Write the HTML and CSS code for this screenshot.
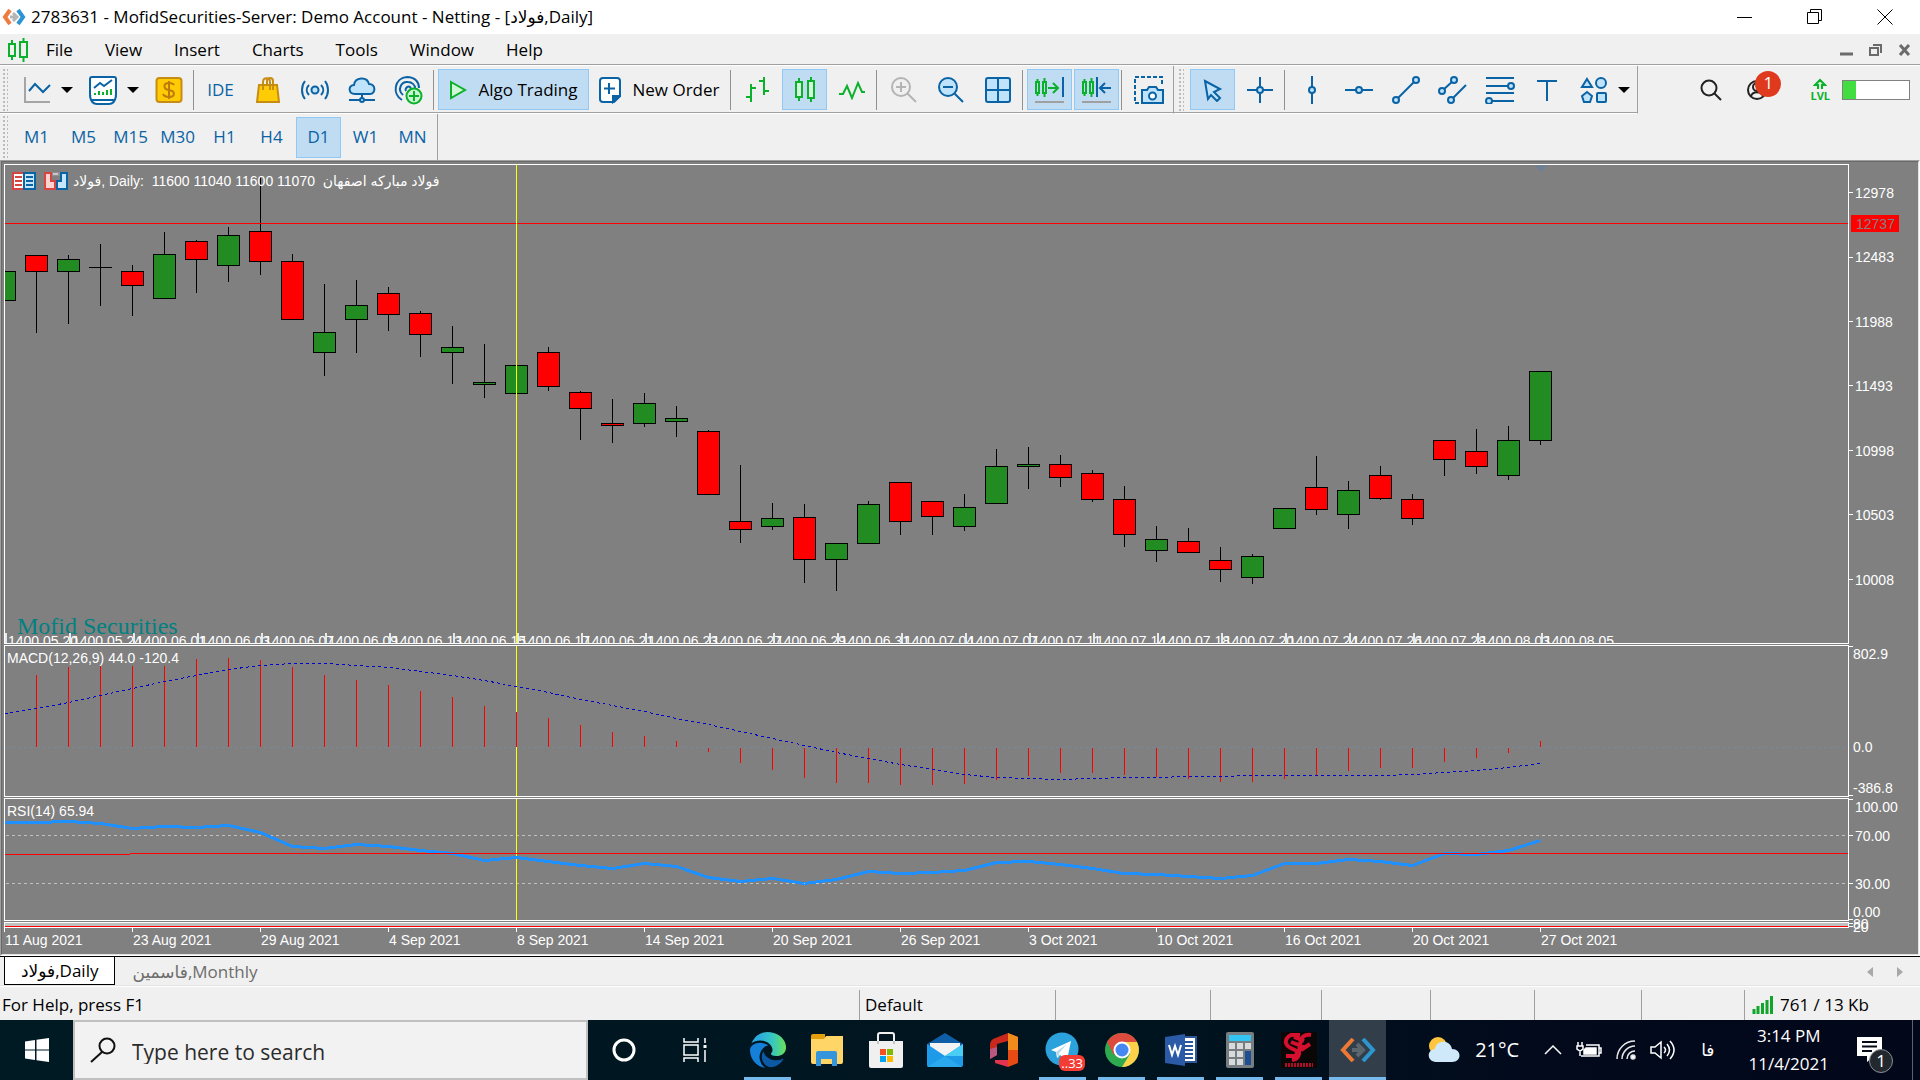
FILE: index.html
```html
<!DOCTYPE html>
<html lang="en">
<head>
  <meta charset="UTF-8">
  <title>2783631 - MofidSecurities-Server: Demo Account - Netting - [فولاد,Daily]</title>
  <link rel="stylesheet" href="styles.css">
</head>
<body>
  <!-- Title bar -->
  <header class="titlebar">
    <svg class="app-logo" width="24" height="18" viewBox="0 0 24 18" fill="none">
      <path d="M8 2L3 9l5 7" stroke="#f07b3f" stroke-width="4"/>
      <path d="M16 2l5 7-5 7" stroke="#2b95d3" stroke-width="4"/>
      <path d="M8 9h6M11 5l4 4-4 4" stroke="#b5b5b5" stroke-width="3"/>
    </svg>
    <h1 class="title">2783631 - MofidSecurities-Server: Demo Account - Netting - [فولاد,Daily]</h1>
    <div class="window-controls">
      <button aria-label="Minimize"><svg width="16" height="16"><path d="M0 8.5h15" stroke="#000"/></svg></button>
      <button aria-label="Restore"><svg width="16" height="16" fill="none" stroke="#000"><path d="M.5 3.5h11v11H.5zM3.5 3.5v-3h11v11h-3"/></svg></button>
      <button aria-label="Close"><svg width="16" height="16" stroke="#000"><path d="M.5.5l15 15M15.5.5l-15 15"/></svg></button>
    </div>
  </header>

  <!-- Menu -->
  <nav class="menubar">
    <svg class="menu-logo" width="22" height="24" viewBox="0 0 22 24" fill="none" stroke="#0cb12b" stroke-width="2">
      <path d="M1 6h6v12H1zM4 2v4M4 18v4" /><path d="M12 4h7v15h-7zM15.500 0v4M15.500 19v5"/>
    </svg>
    <button>File</button>
    <button>View</button>
    <button>Insert</button>
    <button>Charts</button>
    <button>Tools</button>
    <button>Window</button>
    <button>Help</button>
    <div class="mdi-controls">
      <button aria-label="Minimize chart"><svg width="14" height="12"><path d="M0 10h13" stroke="#6b6b6b" stroke-width="3"/></svg></button>
      <button aria-label="Restore chart"><svg width="14" height="12" fill="none" stroke="#6b6b6b" stroke-width="2"><path d="M1 4h8v7H1zM4 1h8v8"/></svg></button>
      <button aria-label="Close chart"><svg width="14" height="12" stroke="#6b6b6b" stroke-width="3"><path d="M2 1l9 10M11 1L2 11"/></svg></button>
    </div>
  </nav>

  <!-- Standard and line studies toolbars -->
  <div class="toolbar-row">
    <div class="toolbar">
      <span class="grip"></span>
      <div class="split">
        <button class="tool" aria-label="New chart"><svg width="28" height="28" fill="none" stroke-width="2"><path d="M2 1v25h25" stroke="#a5a5a5"/><path d="M6 15l6-7 8 8 7-7" stroke="#0a63a5"/></svg></button>
        <button class="drop" aria-label="More charts"></button>
      </div>
      <div class="split">
        <button class="tool" aria-label="Profiles"><svg width="30" height="30" fill="none" stroke="#0a63a5" stroke-width="2"><rect x="2" y="2" width="26" height="20" rx="2" fill="#fff"/><path d="M2 21c1 7 5 8 7 8h12c3 0 6-2 7-8" fill="#fff"/><path d="M4 25h22" stroke-width="2"/><path d="M6 13l6-5 4 3 8-6"/><path d="M7 20v-2M11 20v-4M15 20v-3M19 20v-5M23 20v-6" stroke="#0cb12b"/></svg></button>
        <button class="drop" aria-label="More profiles"></button>
      </div>
      <button class="tool" aria-label="Market"><svg width="28" height="28"><rect x="1.500" y="2" width="25" height="24" rx="3" fill="#ffcb05" stroke="#c78d12" stroke-width="2"/><path d="M19 9c-1-2-3-2-5-2-6 0-6 6 0 7 7 1 6 7 0 7-3 0-5-1-6-3M14 5v18" fill="none" stroke="#c07a0c" stroke-width="2"/></svg></button>
      <i class="sep"></i>
      <button class="tool ide">IDE</button>
      <button class="tool" aria-label="Shop"><svg width="26" height="28"><path d="M4 9h18l2 17H2z" fill="#ffcb05" stroke="#c78d12" stroke-width="2"/><path d="M8 14V6c0-5 7-5 7 0v8M12 9V5c0-4 6-4 6 0v9" fill="none" stroke="#c78d12" stroke-width="2"/></svg></button>
      <button class="tool" aria-label="Signals"><svg width="28" height="24" fill="none" stroke="#0a63a5" stroke-width="2"><circle cx="14" cy="12" r="3.500" fill="#bfe3fb"/><path d="M8 7c-3 3-3 7 0 10M20 7c3 3 3 7 0 10M4 3c-4 5-4 13 0 18M24 3c4 5 4 13 0 18"/></svg></button>
      <button class="tool" aria-label="Virtual hosting"><svg width="28" height="26" fill="none" stroke="#0a63a5" stroke-width="2"><path d="M7 17c-7 0-7-9-1-9 1-8 13-9 15-1 7 0 7 10 1 10z" fill="#bfe3fb"/><path d="M14 17v4M1 23h26"/><circle cx="14" cy="23" r="2" fill="#bfe3fb"/></svg></button>
      <button class="tool" aria-label="Strategy tester"><svg width="30" height="30" fill="none" stroke="#0a63a5" stroke-width="2"><path d="M8 25C-2 19 0 3 13 2c8 0 12 5 12 11M9 20c-6-5-2-14 5-13 4 0 7 3 7 6M12 16c-2-3 4-7 5-2"/><circle cx="20" cy="21" r="7.500" fill="#c9f5d0" stroke="#0cb12b"/><path d="M20 16v10M15 21h10" stroke="#0cb12b"/></svg></button>
      <i class="sep"></i>
      <button class="tool labelled active"><svg width="18" height="20"><path d="M2 2l14 8-14 8z" fill="#d0f8d6" stroke="#0cb12b" stroke-width="2"/></svg>Algo Trading</button>
      <button class="tool labelled order"><svg width="22" height="28" fill="none" stroke="#0a63a5" stroke-width="2"><path d="M4 2h14q3 0 3 3v15l-6 6H4q-3 0-3-3V5q0-3 3-3z" fill="#fff"/><path d="M14 26v-6h7z" fill="#0a63a5"/><path d="M10 7v11M5 12.500h11"/></svg>New Order</button>
      <i class="sep"></i>
      <button class="tool" aria-label="Bar chart"><svg width="26" height="28" fill="none" stroke="#0cb12b" stroke-width="2"><path d="M6 8v18M1 21h5M6 12h5M19 1v18M14 5h5M19 15h5"/></svg></button>
      <button class="tool active" aria-label="Candlesticks"><svg width="26" height="28" fill="#d3f7da" stroke="#0cb12b" stroke-width="2"><path d="M4 6h6v15H4zM16 5h6v17h-6z"/><path d="M7 2v4M7 21v4M19 1v4M19 22v4"/></svg></button>
      <button class="tool" aria-label="Line chart"><svg width="28" height="20" fill="none" stroke="#0cb12b" stroke-width="2"><path d="M1 14h4l4-8 5 12 6-15 4 9h3"/></svg></button>
      <i class="sep"></i>
      <button class="tool" aria-label="Zoom in"><svg width="28" height="28" fill="none" stroke="#b4b4b4" stroke-width="2"><circle cx="11" cy="11" r="9"/><path d="M17 17l9 9M6 11h10M11 6v10"/></svg></button>
      <button class="tool" aria-label="Zoom out"><svg width="28" height="28" fill="none" stroke="#0a63a5" stroke-width="2"><circle cx="11" cy="11" r="9" fill="#bfe3fb"/><path d="M17 17l9 9M6 11h10"/></svg></button>
      <button class="tool" aria-label="Tile windows"><svg width="28" height="28" fill="#bfe3fb" stroke="#0a63a5" stroke-width="2"><rect x="2" y="2" width="24" height="24" rx="2"/><path d="M14 2v24M2 14h24"/></svg></button>
      <i class="sep"></i>
      <button class="tool active" aria-label="Auto scroll"><svg width="32" height="28" fill="none" stroke="#0cb12b" stroke-width="2"><path d="M2 6h3v11H2zM9 6h3v11H9zM3.500 3v3M3.500 17v3M10.500 2v4M10.500 17v4M14 12h9M19 7l5 5-5 5"/><path d="M29 1v20" stroke="#0a63a5"/><path d="M1 26h29" stroke="#a0a0a0"/></svg></button>
      <button class="tool active" aria-label="Chart shift"><svg width="32" height="28" fill="none" stroke="#0cb12b" stroke-width="2"><path d="M2 6h3v11H2zM9 6h3v11H9zM3.500 3v3M3.500 17v3M10.500 2v4M10.500 17v4"/><path d="M16 1v20M20 12h10M24 7l-5 5 5 5" stroke="#0a63a5"/><path d="M1 26h29" stroke="#a0a0a0"/></svg></button>
      <i class="sep"></i>
      <button class="tool" aria-label="Screenshot"><svg width="32" height="32" fill="none" stroke="#0a63a5" stroke-width="2"><path d="M6 29H2V3h27v8" stroke-dasharray="4 2"/><path d="M9 16h5l2-3h7l2 3h5v13H9z" fill="#bfe3fb"/><circle cx="19.500" cy="22" r="3.500" fill="#fff"/></svg></button>
    </div>
    <div class="toolbar studies">
      <span class="grip"></span>
      <button class="tool active" aria-label="Cursor"><svg width="24" height="24"><path d="M4 3l15 8-6 3 6 6-3 3-6-6-3 4z" fill="#bfe3fb" stroke="#0a63a5" stroke-width="2"/></svg></button>
      <button class="tool" aria-label="Crosshair"><svg width="26" height="26" stroke="#0a63a5" stroke-width="2"><path d="M13 0v26M0 13h26"/><circle cx="13" cy="13" r="3" fill="#bfe3fb"/></svg></button>
      <i class="sep"></i>
      <button class="tool" aria-label="Vertical line"><svg width="26" height="28" stroke="#0a63a5" stroke-width="2"><path d="M13 0v28"/><circle cx="13" cy="14" r="3" fill="#bfe3fb"/></svg></button>
      <button class="tool" aria-label="Horizontal line"><svg width="28" height="26" stroke="#0a63a5" stroke-width="2"><path d="M0 13h28"/><circle cx="14" cy="13" r="3" fill="#bfe3fb"/></svg></button>
      <button class="tool" aria-label="Trend line"><svg width="28" height="28" fill="#bfe3fb" stroke="#0a63a5" stroke-width="2"><path d="M4 24L24 4"/><circle cx="4" cy="24" r="3"/><circle cx="24" cy="4" r="3"/></svg></button>
      <button class="tool" aria-label="Channel"><svg width="30" height="28" fill="#bfe3fb" stroke="#0a63a5" stroke-width="2"><path d="M4 15L16 4M13 24L28 9"/><circle cx="4" cy="15" r="3"/><circle cx="16" cy="4" r="3"/><circle cx="13" cy="24" r="3"/></svg></button>
      <button class="tool" aria-label="Fibonacci"><svg width="30" height="28" fill="#bfe3fb" stroke="#0a63a5" stroke-width="2"><path d="M1 2h28M1 10h22M1 17h28M5 25h24"/><circle cx="26" cy="10" r="3"/><circle cx="4" cy="25" r="3"/></svg></button>
      <button class="tool" aria-label="Text"><svg width="22" height="22" stroke="#0a63a5" stroke-width="2"><path d="M1 2h20M11 2v20"/></svg></button>
      <div class="split">
        <button class="tool" aria-label="Shapes"><svg width="28" height="28" fill="#bfe3fb" stroke="#0a63a5" stroke-width="2"><path d="M7 3l5 8H2z"/><circle cx="21" cy="7" r="5"/><path d="M7 16l5 4-2 6H4l-2-6z"/><rect x="17" y="17" width="9" height="9" rx="1"/></svg></button>
        <button class="drop" aria-label="More shapes"></button>
      </div>
    </div>
    <div class="account">
      <button aria-label="Search"><svg width="22" height="22" fill="none" stroke="#222" stroke-width="2"><circle cx="9" cy="9" r="7.500"/><path d="M14 14l7 7"/></svg></button>
      <button class="user" aria-label="Notifications"><svg width="20" height="20" fill="none" stroke="#222" stroke-width="2"><circle cx="10" cy="10" r="9"/><circle cx="10" cy="7" r="4"/><path d="M4 16c2-5 10-5 12 0"/></svg><span class="badge">1</span></button>
      <div class="lvl"><svg width="14" height="12" fill="#d3f7da" stroke="#0cb12b" stroke-width="2"><path d="M5 11V7H2l5-5 5 5H9v4"/></svg>LVL</div>
      <div class="level"><span></span></div>
    </div>
  </div>

  <!-- Timeframes -->
  <div class="toolbar timeframes">
    <span class="grip"></span>
    <button class="tool">M1</button>
    <button class="tool">M5</button>
    <button class="tool">M15</button>
    <button class="tool">M30</button>
    <button class="tool">H1</button>
    <button class="tool">H4</button>
    <button class="tool active">D1</button>
    <button class="tool">W1</button>
    <button class="tool">MN</button>
  </div>

  <!-- Chart window -->
  <main class="chart">
    <div class="chart-inner">
      <div class="pane price">
        <svg class="plot" id="price"></svg>
        <svg class="axis" id="price-axis"></svg>
        <div class="chart-title">
          <svg width="24" height="18" fill="none"><rect x="1" y="1" width="11" height="16" fill="#fff" stroke="#d64541" stroke-width="2"/><rect x="12" y="1" width="11" height="16" fill="#c5e6fb" stroke="#0a63a5" stroke-width="2"/><path d="M3 5h7M3 9h7M3 13h7" stroke="#d64541" stroke-width="2"/><path d="M14 5h7M14 9h7M14 13h7" stroke="#0a63a5" stroke-width="2"/></svg>
          <svg width="24" height="18"><path d="M1 1h6v8h4v8H1z" fill="#fbd3cf" stroke="#d64541" stroke-width="2"/><path d="M17 1h6v16H13V9h4z" fill="#c5e6fb" stroke="#0a63a5" stroke-width="2"/><path d="M8 0h8v4H8z" fill="#909090"/><path d="M9 2h5" stroke="#fff"/></svg>
          <span>فولاد, Daily:  11600 11040 11600 11070  فولاد مباركه اصفهان</span>
        </div>
      </div>
      <div class="pane macd">
        <svg class="plot" id="macd"></svg>
        <svg class="axis" id="macd-axis"></svg>
      </div>
      <div class="pane rsi">
        <svg class="plot" id="rsi"></svg>
        <svg class="axis" id="rsi-axis"></svg>
      </div>
      <div class="pane strip">
        <div class="plot"></div>
        <svg class="axis" id="strip-axis"></svg>
      </div>
      <svg class="time-axis" id="time-axis"></svg>
    </div>
  </main>

  <div class="tabs">
    <button class="tab active">فولاد,Daily</button>
    <button class="tab">فاسمین,Monthly</button>
    <div class="tab-scroll">
      <button aria-label="Scroll left"><svg width="6" height="10"><path d="M6 0v10L0 5z" fill="#a8a8a8"/></svg></button>
      <button aria-label="Scroll right"><svg width="6" height="10"><path d="M0 0v10l6-5z" fill="#a8a8a8"/></svg></button>
    </div>
  </div>

  <div class="statusbar">
    <span class="help">For Help, press F1</span>
    <span class="profile">Default</span>
    <span class="c1"></span><span class="c2"></span><span class="c3"></span>
    <span class="c4"></span><span class="c5"></span><span class="c6"></span>
    <span class="traffic"><svg width="22" height="18" stroke="#12a52b" stroke-width="3"><path d="M2 18v-5M6 18v-8M10.500 18V7M15 18V4M19.500 18V0"/></svg>761 / 13 Kb</span>
  </div>

  <!-- Windows taskbar -->
  <footer class="taskbar">
    <button class="start" aria-label="Start"><svg width="24" height="24" fill="#fff"><path d="M0 3.500l10-1.500v9.500H0zM11.500 1.800L24 0v11.500H11.500zM0 12.500h10V22L0 20.500zM11.500 12.500H24V24l-12.500-1.800z"/></svg></button>
    <label class="search">
      <svg width="26" height="26" fill="none" stroke="#111" stroke-width="2"><circle cx="17" cy="9" r="7.500"/><path d="M12 15L1 25"/></svg>
      <input type="text" placeholder="Type here to search">
    </label>
    <button class="wide" aria-label="Cortana"><svg width="26" height="26"><circle cx="13" cy="13" r="10" fill="none" stroke="#fff" stroke-width="3"/></svg></button>
    <button class="wide" aria-label="Task view"><svg width="26" height="24" fill="none" stroke="#fff" stroke-width="1.500"><path d="M2 0v4h14V0M2 24v-4h14v4M2 7h14v10H2zM23 0v5M23 12v12"/><path d="M21.500 8.500h3" stroke-width="3"/></svg></button>
    <div class="apps">
      <button class="open" aria-label="Edge">
        <svg width="36" height="36" viewBox="0 0 24 24">
          <defs><linearGradient id="edge"><stop offset=".2" stop-color="#2aa9e0"/><stop offset=".6" stop-color="#35c6c4"/><stop offset="1" stop-color="#6be056"/></linearGradient></defs>
          <path fill="#0c59a4" d="M21.860 17.860q.14 0 .25.12.1.13.1.25t-.11.33l-.32.46-.43.53-.44.5q-.26.25-.38.37l-.22.22q-.58.53-1.340 1.040-.76.51-1.600.91-.86.4-1.740.64t-1.670.24q-.9 0-1.690-.28-.8-.28-1.480-.78-.68-.5-1.220-1.170-.53-.66-.92-1.440-.38-.77-.58-1.600-.2-.83-.2-1.670 0-1 .32-1.960.33-.97.87-1.800.14.95.55 1.770.41.82 1.020 1.500.6.68 1.380 1.210.78.54 1.640.9.86.36 1.770.56.92.2 1.800.2 1.120 0 2.180-.24 1.060-.23 2.060-.72l.2-.1.2-.05z"/>
          <path fill="#1580d8" d="M6.360 16.590q0 1.100.27 2.150.27 1.060.78 2.030.51.96 1.240 1.770.74.82 1.660 1.400-1.470-.2-2.800-.74-1.330-.55-2.480-1.370-1.150-.83-2.080-1.900-.92-1.070-1.580-2.330T.36 14.940Q0 13.540 0 12.060q0-.81.32-1.490.31-.68.83-1.230.53-.55 1.200-.96.66-.4 1.350-.66.74-.27 1.500-.39.78-.12 1.550-.12.7 0 1.420.1.72.12 1.400.35.68.23 1.320.57.63.35 1.160.83-.35 0-.7.07-.33.07-.65.23-.63.28-1.200.74-.57.46-1.050 1.040-.48.58-.87 1.260-.38.67-.65 1.390-.27.71-.42 1.440-.15.72-.15 1.380z"/>
          <path fill="url(#edge)" d="M11.960.06q1.700 0 3.330.39 1.630.38 3.070 1.150 1.430.77 2.620 1.930 1.180 1.160 1.980 2.700.49.94.76 1.960.28 1 .28 2.080 0 .89-.23 1.700-.24.8-.69 1.480-.45.68-1.100 1.220-.64.53-1.450.88-.54.24-1.110.36-.58.13-1.160.13-.42 0-.97-.03-.54-.03-1.100-.12-.55-.1-1.050-.28-.5-.19-.84-.5-.12-.09-.23-.24-.1-.16-.1-.33 0-.15.16-.35.16-.2.35-.5.2-.28.36-.68.16-.4.16-.95 0-1.060-.4-1.960-.4-.91-1.060-1.640-.66-.74-1.520-1.280-.86-.55-1.790-.89-.84-.3-1.720-.44-.87-.14-1.760-.14-1.550 0-3.060.45T.94 7.550q.71-1.740 1.810-3.130 1.100-1.380 2.520-2.350Q6.680 1.100 8.370.58q1.700-.52 3.580-.52Z"/>
        </svg>
      </button>
      <button aria-label="File Explorer"><svg width="32" height="32"><path d="M0 2q0-2 2-2h12v5H0z" fill="#e39e0b"/><path d="M0 5h13l2-3h17v26q0 2-2 2H2q-2 0-2-2z" fill="#ffd567"/><path d="M5 32V19q0-2 2-2h17q2 0 2 2v13h-5v-7H10v7z" fill="#3494dc"/></svg></button>
      <button aria-label="Store"><svg width="36" height="36"><path d="M10 12V3q0-2 2-2h12q2 0 2 2v9" fill="none" stroke="#f0f0f0" stroke-width="2"/><path d="M1 9h34v25q0 2-2 2H3q-2 0-2-2z" fill="#f0f0f0"/><path d="M10 9v3M26 9v3" stroke="#c4c4c4" stroke-width="2"/><path fill="#f25022" d="M12 17h6v6h-6z"/><path fill="#7fba00" d="M19 17h6v6h-6z"/><path fill="#00a4ef" d="M12 24h6v6h-6z"/><path fill="#ffb900" d="M19 24h6v6h-6z"/></svg></button>
      <button aria-label="Mail"><svg width="36" height="34"><path d="M0 11L18 0l18 11v4H0z" fill="#0f5ea8"/><path d="M3 10h30v5L18 24 3 15z" fill="#f3f3f3"/><path d="M0 11l18 12 18-12v21q0 2-2 2H2q-2 0-2-2z" fill="#1e9be8"/><path d="M18 23l18-12v12z" fill="#48cdf5"/><path d="M0 34l18-11 17 11z" fill="#2aa9ec"/></svg></button>
      <button aria-label="Office"><svg width="28" height="34"><path d="M18 0l10 4v26l-10 4z" fill="#e84a14"/><path d="M18 0l10 4v13H18z" fill="#f38a1c"/><path d="M18 0L3 6Q0 8 0 11v15l7-4V11l11-3z" fill="#c9281c"/><path d="M5 27h13v7L5 30z" fill="#e2334f"/><path d="M0 16l7-2v8l-7 4z" fill="#b9587e"/></svg></button>
      <button class="open" aria-label="Telegram"><svg width="36" height="36"><circle cx="17" cy="17" r="16.500" fill="#2ba2dc"/><path d="M6 18L26 9l-4 19-7-5-3 3-1-6z" fill="#fff"/><path d="M11 20l11-8-8 9v5z" fill="#b9d6ea"/></svg><span class="badge">..33</span></button>
      <button class="open" aria-label="Chrome"><svg width="34" height="34"><circle cx="17" cy="17" r="17" fill="#2da94f"/><path d="M2 9C9-3 26-3 32 9H17z" fill="#dd4b3e"/><path d="M2 9l7 13 8-13z" fill="#dd4b3e"/><path d="M17 9h15c6 12-3 25-15 25l8-13z" fill="#fdd24a"/><circle cx="17" cy="17" r="8.500" fill="#fff"/><circle cx="17" cy="17" r="6.500" fill="#4688f1"/></svg></button>
      <button class="open" aria-label="Word"><svg width="32" height="32"><path d="M14 3h17v25H14z" fill="#fff" stroke="#2b579a" stroke-width="2"/><path d="M20 8h8M20 12h8M20 16h8M20 20h8M20 24h8" stroke="#2b579a" stroke-width="2"/><path d="M0 3l20-3v32L0 29z" fill="#2b5aa6"/><path d="M4 11l3 10 3-9 3 9 3-10" fill="none" stroke="#fff" stroke-width="2"/></svg></button>
      <button class="open" aria-label="Calculator"><svg width="28" height="36"><rect width="28" height="36" rx="2" fill="#787d82"/><path d="M3 3h22v6H3z" fill="#32c5f4"/><path d="M3 11h6v6H3zM11 11h6v6h-6zM19 11h6v6h-6zM3 19h6v6H3zM11 19h6v6h-6zM3 27h6v6H3zM11 27h6v6h-6z" fill="#d8dadc"/><path d="M19 19h6v14h-6z" fill="#1d4f91"/></svg></button>
      <button class="open" aria-label="SF Trading"><svg width="36" height="36"><rect width="36" height="36" fill="#0b0707"/><path d="M19 3H10q-6 3-5 8 1 4 9 7 4 3 0 6H5M30 3q-8-1-10 5-2 9-2 14-1 5-7 6M10 10l13 5M13 5l10 4M29 12l-9 6" fill="none" stroke="#d5102e" stroke-width="4"/><path d="M4 33h28" stroke="#b00d26" stroke-width="4" stroke-dasharray="2 1"/></svg></button>
      <button class="open current" aria-label="MetaTrader"><svg width="36" height="24" fill="none" stroke-width="4"><path d="M13 1L3 12l10 11" stroke="#ee7935"/><path d="M23 1l10 11-10 11" stroke="#2d96cf"/><path d="M12 12h11M17 6l6 6-6 6" stroke="#5c666e"/></svg></button>
    </div>
    <div class="tray">
      <div class="weather"><svg width="32" height="26"><circle cx="10" cy="9" r="9" fill="#ffc63d"/><path d="M8 25c-9 0-10-12-1-13 1-9 15-10 17 0 10 0 10 13 0 13z" fill="#cfe9fb"/></svg>21°C</div>
      <div class="tray-icons">
        <svg width="18" height="12" fill="none" stroke="#fff" stroke-width="1.500"><path d="M1 10l8-8 8 8"/></svg>
        <svg width="26" height="18" fill="none" stroke="#fff" stroke-width="1.500"><path d="M5 15h18V4H10M23 7h2v5h-2"/><path d="M10 7h10v6H8V9z" fill="#fff"/><path d="M2 1v4M6 1v4M1 5h6v3l-3 2-3-2zM4 10v5"/></svg>
        <svg width="20" height="20" fill="none" stroke="#e8e8e8" stroke-width="1.500"><path d="M1 19C1 9 9 1 19 1M6 19C6 12 12 6 19 6M11 19c0-5 4-8 8-8"/><circle cx="17" cy="17" r="2" fill="#fff"/></svg>
        <svg width="26" height="20" fill="none" stroke="#fff" stroke-width="1.500"><path d="M1 7h4l6-5v16l-6-5H1zM14 7q3 3 0 6M17 4q5 6 0 12M20 1q8 9 0 18"/></svg>
      </div>
      <span class="lang">فا</span>
      <div class="clock"><span>3:14 PM</span><span>11/4/2021</span></div>
      <button class="notify" aria-label="Notifications"><svg width="26" height="26"><path d="M0 0h25v19h-8l-7 6v-6H0z" fill="#fff"/><path d="M5 5h15M5 9.500h15M5 14h10" stroke="#050b18" stroke-width="2"/></svg><span class="count">1</span></button>
    </div>
  </footer>

  <script src="script.js"></script>
</body>
</html>
```
FILE: styles.css
```css
* {
  box-sizing: border-box;
}

body {
  margin: 0;
  min-height: 100vh;
  display: flex;
  flex-direction: column;
  background-color: #f0f0f0;
  color: #000;
  font-family: "Open Sans", "Noto Sans", "DejaVu Sans", sans-serif;
  font-size: 17px;
  line-height: 24px;
}

button {
  padding: 0;
  border: none;
  background: none;
  color: inherit;
  font: inherit;
}

svg {
  display: block;
  flex: none;
}

/* Title bar */
.titlebar {
  display: flex;
  align-items: center;
  height: 34px;
  background-color: #fff;
}

.app-logo {
  margin: 0 5px 0 2px;
}

.title {
  flex: 1;
  margin: 0;
  font-size: 17px;
  font-weight: normal;
  white-space: nowrap;
}

.window-controls,
.mdi-controls {
  display: flex;
}

.window-controls button {
  display: flex;
  align-items: center;
  justify-content: center;
  width: 70px;
  height: 34px;
}

/* Menu */
.menubar {
  display: flex;
  align-items: center;
  height: 32px;
  border-bottom: 1px solid #fff;
  box-shadow: inset 0 -1px #a0a0a0;
}

.menu-logo {
  margin: 0 0 0 8px;
}

.menubar > button {
  padding: 0 16px;
}

.mdi-controls {
  margin-left: auto;
  gap: 15px;
  padding-right: 8px;
}

/* Toolbars */
.toolbar-row {
  display: flex;
  height: 48px;
}

.toolbar {
  display: flex;
  align-items: center;
  gap: 2px;
  padding-right: 2px;
  border-right: 1px solid #a0a0a0;
  border-bottom: 1px solid #fff;
  box-shadow: inset 0 -1px #a0a0a0;
}

.studies {
  padding-left: 2px;
}

.grip {
  width: 6px;
  height: 44px;
  margin: 0 4px 0 2px;
  background-image: radial-gradient(#bdbdbd 1px, transparent 1px);
  background-size: 4px 4px;
}

.tool {
  display: flex;
  align-items: center;
  justify-content: center;
  width: 45px;
  height: 41px;
  color: #0a63a5;
}

.tool.active {
  background-color: #c0dcf3;
  border: 1px solid #90c8f6;
}

.tool.labelled {
  width: 151px;
  gap: 11px;
  color: #000;
  white-space: nowrap;
}

.tool.labelled.order {
  width: 137px;
}

.split {
  display: flex;
  width: 64px;
}

.drop {
  width: 16px;
  display: flex;
  align-items: center;
  justify-content: center;
}

.drop::before {
  content: "";
  border: 6px solid transparent;
  border-top-color: #000;
  border-bottom: none;
}

.sep {
  width: 1px;
  height: 40px;
  margin-right: 2px;
  background-color: #919191;
}

.account {
  display: flex;
  align-items: center;
  margin-left: auto;
  padding-right: 10px;
}

.user {
  position: relative;
  margin: 0 43px 0 25px;
}

.badge {
  position: absolute;
  border-radius: 13px;
  background-color: #e03a1e;
  color: #fff;
  text-align: center;
}

.user .badge {
  left: 8px;
  top: -9px;
  width: 26px;
  height: 26px;
}

.lvl {
  display: flex;
  flex-direction: column;
  align-items: center;
  margin-right: 12px;
  color: #0cb12b;
  font-size: 11px;
  font-weight: bold;
  line-height: 12px;
}

.level {
  width: 68px;
  height: 20px;
  border: 1px solid #808080;
  background-color: #fff;
}

.level span {
  display: block;
  width: 20%;
  height: 100%;
  background-color: #41dd41;
}

.timeframes {
  align-self: flex-start;
  height: 46px;
  border-bottom: none;
  box-shadow: none;
}

/* Chart window */
.chart {
  border: 1px solid;
  border-color: #a0a0a0 #fff #fff #a0a0a0;
}

.chart-inner {
  display: flex;
  flex-direction: column;
  gap: 1px;
  padding: 2px 0 0 2px;
  border: 1px solid;
  border-color: #696969 #e3e3e3 #e3e3e3 #696969;
  background-color: #808080;
  font-family: "Liberation Sans", "DejaVu Sans", sans-serif;
  font-size: 14px;
  line-height: 18px;
  color: #fff;
}

.pane {
  position: relative;
  display: flex;
}

.plot {
  flex: 1;
  min-width: 0;
  border: 1px solid #fff;
}

.axis {
  width: 69px;
  height: 100%;
  overflow: visible;
}

.plot text,
.axis text,
.time-axis text {
  fill: #fff;
}

.price {
  height: 480px;
}

.macd {
  height: 152px;
}

.rsi {
  height: 123px;
}

.strip {
  height: 6px;
}

.strip .plot {
  background: linear-gradient(#c0c0c0 3px, #f00 3px);
}

.time-axis {
  width: 100%;
  height: 26px;
  margin-top: -1px;
}

.chart-title {
  position: absolute;
  left: 8px;
  top: 8px;
  display: flex;
  align-items: center;
  gap: 8px;
  white-space: pre;
}

.chart-title span {
  margin-left: -3px;
}

.plot .watermark {
  font-family: "Liberation Serif", serif;
  font-size: 24px;
  fill: #008080;
}

.axis .current {
  fill: #808080;
}

/* Chart tabs */
.tabs {
  display: flex;
  height: 31px;
  padding: 0 17px 0 4px;
  border-top: 1px solid #000;
  border-bottom: 1px solid #fff;
  box-shadow: inset 0 -1px #e3e3e3;
}

.tab {
  height: 28px;
  padding: 2px 17px 0;
  color: #6d6d6d;
  white-space: nowrap;
}

.tab.active {
  border: 1px solid #000;
  border-top: none;
  background-color: #fff;
  color: #000;
  padding: 0 16px;
}

.tab-scroll {
  display: flex;
  align-items: center;
  gap: 24px;
  margin-left: auto;
}

/* Status bar */
.statusbar {
  display: flex;
  flex: 1;
  height: 33px;
  padding-top: 3px;
}

.statusbar span {
  display: flex;
  align-items: center;
  padding-left: 5px;
  border-left: 1px solid #a0a0a0;
}

.statusbar .help {
  flex: 1;
  padding-left: 2px;
  border: none;
}

.profile { width: 196px; }
.c1 { width: 155px; }
.c2 { width: 111px; }
.c3 { width: 109px; }
.c4 { width: 104px; }
.c5 { width: 107px; }
.c6 { width: 103px; }

.statusbar .traffic {
  width: 176px;
  gap: 6px;
  padding-left: 7px;
}

/* Taskbar */
.taskbar {
  display: flex;
  height: 60px;
  background: linear-gradient(90deg, #001a24, #00141f 60%, #020a1c 80%, #02071a);
  color: #fff;
}

.taskbar button {
  position: relative;
  display: flex;
  align-items: center;
  justify-content: center;
}

.start {
  width: 73px;
}

.search {
  display: flex;
  align-items: center;
  gap: 16px;
  width: 515px;
  padding-left: 15px;
  border: 2px solid #c0c0c0;
  background-color: #f2f2f2;
}

.search input {
  flex: 1;
  min-width: 0;
  padding: 3px 0 0;
  border: none;
  background: none;
  font: inherit;
  font-size: 21px;
}

.search input::placeholder {
  color: #2b2b2b;
  opacity: 1;
}

.taskbar .wide {
  width: 71px;
}

.apps {
  display: flex;
  gap: 2px;
  margin-left: 9px;
}

.apps button {
  width: 57px;
}

.apps .open::after {
  content: "";
  position: absolute;
  left: 5px;
  right: 5px;
  bottom: 0;
  height: 3px;
  background-color: #76b9ed;
}

.apps .current {
  background-color: #323f4b;
}

.apps .current::after {
  left: 0;
  right: 0;
}

.apps .badge {
  right: 6px;
  bottom: 9px;
  padding: 0 2px;
  border-radius: 6px;
  background-color: #f23c34;
  font-size: 13px;
  line-height: 16px;
}

.tray {
  display: flex;
  align-items: center;
  margin-left: auto;
  padding-right: 7px;
}

.weather {
  display: flex;
  align-items: center;
  gap: 15px;
  font-size: 20px;
}

.tray-icons {
  display: flex;
  align-items: center;
  gap: 14px;
  margin: 0 25px;
}

.clock {
  display: flex;
  flex-direction: column;
  align-items: center;
  gap: 4px;
  margin: 0 28px 0 34px;
}

.notify {
  height: 60px;
  padding-right: 29px;
  border-right: 1px solid #5a6470;
}

.count {
  position: absolute;
  left: 12px;
  top: 29px;
  width: 24px;
  height: 24px;
  border: 1px solid #8a8f96;
  border-radius: 12px;
  background-color: #23272e;
  line-height: 22px;
}
```
FILE: script.js
```js
// Bars are 32px apart, the first one sits on the left frame of the pane
const step = 32;
const left = 4;

// [high, top, bottom, low, up/down]
const candles = [
  [271, 271, 300, 300, 1], [255, 255, 271, 332, 0], [255, 259, 271, 323, 1], [244, 267, 267, 305, 1],
  [265, 271, 285, 315, 0], [232, 254, 298, 298, 1], [240, 241, 259, 292, 0], [227, 235, 265, 281, 1],
  [177, 231, 261, 274, 0], [254, 261, 319, 319, 0], [284, 332, 352, 375, 1], [280, 305, 319, 352, 1],
  [287, 293, 314, 330, 0], [311, 313, 334, 356, 0], [326, 347, 352, 383, 1], [344, 382, 384, 397, 1],
  [365, 365, 393, 393, 1], [347, 352, 386, 390, 0], [391, 392, 408, 439, 0], [399, 423, 425, 442, 0],
  [393, 403, 423, 426, 1], [406, 418, 421, 436, 1], [430, 431, 494, 494, 0], [465, 521, 529, 542, 0],
  [503, 518, 526, 529, 1], [504, 517, 559, 582, 0], [543, 543, 559, 590, 1], [501, 504, 543, 543, 1],
  [482, 482, 521, 534, 0], [501, 501, 516, 534, 0], [494, 507, 526, 530, 1], [449, 466, 503, 503, 1],
  [447, 464, 466, 488, 1], [455, 464, 477, 486, 0], [470, 473, 499, 501, 0], [486, 499, 534, 546, 0],
  [526, 539, 550, 561, 1], [528, 541, 552, 552, 0], [547, 560, 569, 581, 0], [554, 556, 577, 583, 1],
  [508, 508, 528, 528, 1], [456, 487, 509, 514, 0], [481, 490, 514, 528, 1], [466, 475, 498, 499, 0],
  [494, 499, 518, 524, 0], [440, 440, 459, 475, 0], [429, 451, 466, 473, 0], [426, 440, 475, 479, 1],
  [371, 371, 440, 444, 1]
];

const macdBars = [747, 675, 667, 666, 666, 666, 659, 658, 660, 667, 675, 680, 685, 691, 697, 706, 712, 718,
  725, 732, 736, 741, 751, 762, 769, 777, 782, 782, 784, 784, 783, 779, 775, 772, 772, 774, 776, 778, 781,
  781, 778, 775, 770, 767, 767, 761, 757, 752, 741];

const macdSignal = [713, 708, 702, 695, 688, 681, 675, 669, 665, 663, 663, 665, 667, 671, 675, 680, 686, 692,
  699, 705, 711, 718, 724, 731, 738, 745, 752, 758, 764, 769, 774, 777, 778, 779, 778, 777, 777, 776, 776,
  775, 775, 775, 775, 775, 774, 772, 770, 767, 763];

const rsiLine = [822, 822, 821, 823, 828, 826, 827, 825, 832, 846, 848, 844, 846, 850, 853, 860, 857, 861,
  865, 868, 863, 866, 877, 881, 878, 883, 879, 871, 873, 872, 870, 862, 861, 864, 868, 873, 874, 876, 878,
  875, 863, 863, 859, 861, 865, 853, 854, 850, 840];

const persianDates = ['05.20', '05.24', '06.01', '06.03', '06.07', '06.09', '06.13', '06.15', '06.17',
  '06.21', '06.23', '06.27', '06.29', '06.31', '07.04', '07.07', '07.11', '07.14', '07.18', '07.20',
  '07.24', '07.26', '07.28', '08.03', '08.05'];

const dates = ['11 Aug 2021', '23 Aug 2021', '29 Aug 2021', '4 Sep 2021', '8 Sep 2021', '14 Sep 2021',
  '20 Sep 2021', '26 Sep 2021', '3 Oct 2021', '10 Oct 2021', '16 Oct 2021', '20 Oct 2021', '27 Oct 2021'];

function barX(i) {
  return left + i * step;
}

function hline(y, color, dash) {
  return `<line x1="0" x2="5000" y1="${y + 0.5}" y2="${y + 0.5}" stroke="${color}" stroke-dasharray="${dash || 'none'}"/>`;
}

function vline(x, y1, y2, color) {
  return `<rect x="${x}" y="${y1}" width="1" height="${y2 - y1 + 1}" fill="${color}"/>`;
}

function polyline(values, attrs) {
  const points = values.map((y, i) => `${barX(i) + 0.5},${y + 0.5}`).join(' ');
  return `<polyline points="${points}" fill="none" ${attrs}/>`;
}

// Shift the content so that it can be written in window coordinates
function draw(id, x, y, content) {
  document.getElementById(id).innerHTML = `<g transform="translate(${-x},${-y})" shape-rendering="crispEdges">${content}</g>`;
}

function drawAxis(id, top, labels, extra) {
  let out = extra || '';
  labels.forEach(([text, y, tick, x]) => {
    if (tick) out += `<rect x="1849" y="${tick}" width="4" height="1" fill="#fff"/>`;
    out += `<text x="${x || 1853}" y="${y + 5}">${text}</text>`;
  });
  draw(id, 1849, top, out);
}

function drawPrice() {
  let out = '<path d="M1533 165h15l-7 7z" fill="#708090"/>';
  candles.forEach(([high, top, bottom, low, up], i) => {
    const x = barX(i);
    out += vline(x, high, low, '#000');
    out += `<rect x="${x - 11}" y="${top}" width="23" height="${bottom - top + 1}" fill="#000"/>`;
    if (bottom - top > 1) {
      out += `<rect x="${x - 10}" y="${top + 1}" width="21" height="${bottom - top - 1}" fill="${up ? '#228b22' : '#f00'}"/>`;
    }
  });
  out += '<text class="watermark" x="17" y="634">Mofid Securities</text>';
  persianDates.forEach((date, i) => {
    const x = left + i * 64;
    out += `<rect x="${x + 1}" y="633" width="2" height="10" fill="#e8e8e8"/><text x="${x + 4}" y="646">1400.${date}</text>`;
  });
  out += hline(223, '#f00') + vline(516, 165, 643, '#ff0');
  draw('price', 5, 165, out);
}

function drawMacd() {
  let out = hline(747, '#778899', '3 3') + vline(516, 646, 796, '#ff0');
  macdBars.forEach((y, i) => {
    if (y < 747) out += vline(barX(i), y, 746, '#f00');
    if (y > 747) out += vline(barX(i), 748, y, '#f00');
  });
  out += polyline(macdSignal, 'stroke="#0000cd" stroke-dasharray="3 3"');
  out += '<text x="7" y="663">MACD(12,26,9) 44.0 -120.4</text>';
  draw('macd', 5, 646, out);
}

function drawRsi() {
  let out = hline(835, '#c0c0c0', '3 3') + hline(883, '#c0c0c0', '3 3') + vline(516, 799, 920, '#ff0');
  out += polyline(rsiLine, 'stroke="#1e90ff" stroke-width="3"');
  out += '<path d="M0 854.5H130M130 853.5H5000" stroke="#f00"/>';
  out += '<text x="7" y="816">RSI(14) 65.94</text>';
  draw('rsi', 5, 799, out);
}

function drawTimeAxis() {
  let out = '';
  dates.forEach((date, i) => {
    const x = left + i * 128;
    out += `<rect x="${x}" y="928" width="1" height="4" fill="#fff"/><text x="${x + 1}" y="945">${date}</text>`;
  });
  draw('time-axis', 4, 928, out);
}

drawPrice();
drawMacd();
drawRsi();
drawTimeAxis();

drawAxis('price-axis', 164, [
  ['12978', 193, 192, 1855], ['12483', 257, 257, 1855], ['11988', 322, 321, 1855], ['11493', 386, 385, 1855],
  ['10998', 451, 450, 1855], ['10503', 515, 514, 1855], ['10008', 580, 579, 1855]
], '<rect x="1851" y="215" width="48" height="17" fill="#f00"/><text class="current" x="1856" y="229">12737</text>');
drawAxis('macd-axis', 645, [['802.9', 654, 646], ['0.0', 747], ['-386.8', 788, 795]]);
drawAxis('rsi-axis', 798, [['100.00', 807, 799, 1855], ['70.00', 836, 835, 1855], ['30.00', 884, 883, 1855], ['0.00', 912, 919]]);
drawAxis('strip-axis', 922, [['80', 924, 923], ['20', 927, 926]]);
```
